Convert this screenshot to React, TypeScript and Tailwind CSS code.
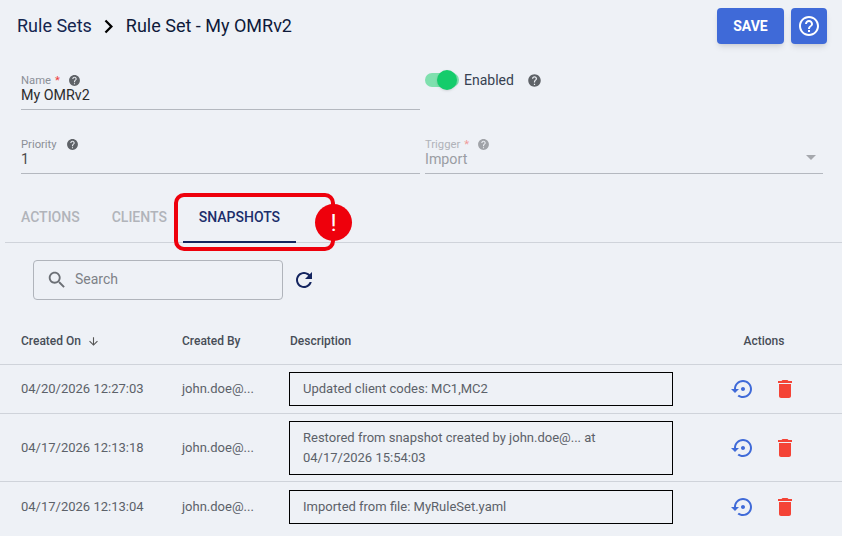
import React from "react";

const helpFilled =
  "M12 2C6.48 2 2 6.48 2 12s4.48 10 10 10 10-4.48 10-10S17.52 2 12 2zm1 17h-2v-2h2v2zm2.07-7.75l-.9.92C13.45 12.9 13 13.5 13 15h-2v-.5c0-1.1.45-2.1 1.17-2.83l1.24-1.26c.37-.36.59-.86.59-1.41 0-1.1-.9-2-2-2s-2 .9-2 2H8c0-2.21 1.79-4 4-4s4 1.79 4 4c0 .88-.36 1.68-.93 2.25z";

const Icon = ({ d, className }: { d: string; className: string }) => (
  <svg viewBox="0 0 24 24" fill="currentColor" className={className} aria-hidden="true">
    <path d={d} />
  </svg>
);

const Hint = ({ className }: { className: string }) => (
  <Icon d={helpFilled} className={`w-[13px] h-[13px] ${className}`} />
);

const rows = [
  {
    date: "04/20/2026 12:27:03",
    lines: ["Updated client codes: MC1,MC2"],
    height: "h-[49px] border-b",
  },
  {
    date: "04/17/2026 12:13:18",
    lines: ["Restored from snapshot created by john.doe@... at", "04/17/2026 15:54:03"],
    height: "h-[68px] border-b",
  },
  {
    date: "04/17/2026 12:13:04",
    lines: ["Imported from file: MyRuleSet.yaml"],
    height: "h-[49px]",
  },
];

const App = () => {
  return (
    <div className="relative w-[842px] h-[536px] overflow-hidden bg-[#eef1f6] font-['Roboto',sans-serif] text-[#1f2937]">
      {/* header */}
      <div className="flex items-center justify-between h-[36px] mt-2 pl-[17px] pr-[15px]">
        <div className="flex items-center text-[18px] leading-[34px] -mt-[1px] text-[#0e1a3a]">
          <span className="text-[#14254f]">Rule Sets</span>
          <Icon
            d="M10 6L8.59 7.41 13.17 12l-4.58 4.59L10 18l6-6z"
            className="w-[27px] h-[27px] ml-[3px] mr-[1px] mt-[1px] text-black"
          />
          <span className="ml-[3px]">Rule Set - My OMRv2</span>
        </div>
        <div className="flex gap-[7px]">
          <button
            type="button"
            className="w-[67px] h-[36px] rounded bg-[#3f6ad8] text-white text-[14px] font-bold shadow-md"
          >
            SAVE
          </button>
          <button
            type="button"
            className="flex items-center justify-center w-[36px] h-[36px] rounded bg-[#3f6ad8] text-white shadow-md"
          >
            <Icon
              d="M11 18h2v-2h-2v2zm1-16C6.48 2 2 6.48 2 12s4.48 10 10 10 10-4.48 10-10S17.52 2 12 2zm0 18c-4.41 0-8-3.59-8-8s3.59-8 8-8 8 3.59 8 8-3.59 8-8 8zm0-14c-2.21 0-4 1.79-4 4h2c0-1.1.9-2 2-2s2 .9 2 2c0 2-3 1.75-3 5h2c0-2.25 3-2.5 3-5 0-2.21-1.79-4-4-4z"
              className="w-[24px] h-[24px]"
            />
          </button>
        </div>
      </div>

      {/* form */}
      <div className="grid grid-cols-[399px_398px] gap-x-[5px] gap-y-[27px] ml-[21px] mt-[29px]">
        <div className="h-[37px] border-b border-[#b4b8bf]">
          <div className="flex items-center h-[15px] text-[11.25px] text-[#8b8f96] leading-[15px]">
            Name <span className="ml-[4px] text-[#ee3b3b]">*</span>
            <Hint className="ml-[8px] text-[#5f6368]" />
          </div>
          <div className="text-[14.25px] leading-[15px] text-[#2c2c2c]">My OMRv2</div>
        </div>
        <div className="flex items-center h-[24px] -mt-[5px] text-[14px] text-[#374151]">
          <span className="relative w-[34px] h-[14px] rounded-full bg-[#7fe0ae]">
            <span className="absolute -top-[3px] left-[12px] w-[20px] h-[20px] rounded-full bg-[#14cc6b] shadow" />
          </span>
          <span className="ml-[5px]">Enabled</span>
          <Hint className="ml-[13px] w-[15px] h-[15px] text-[#5f6368]" />
        </div>
        <div className="h-[37px] border-b border-[#b4b8bf]">
          <div className="flex items-center h-[15px] text-[11.25px] text-[#8b8f96] leading-[15px]">
            Priority
            <Hint className="ml-[9px] text-[#5f6368]" />
          </div>
          <div className="text-[14.25px] leading-[15px] text-[#4b4b4b]">1</div>
        </div>
        <div className="relative h-[37px] border-b border-[#b4b8bf]">
          <div className="flex items-center h-[15px] text-[11.25px] text-[#b0b3b9] leading-[15px]">
            Trigger <span className="ml-[4px] text-[#f09a9a]">*</span>
            <Hint className="ml-[8px] text-[#a0a3a8]" />
          </div>
          <div className="text-[14.25px] leading-[15px] text-[#9a9da3]">Import</div>
          <Icon d="M7 10l5 5 5-5z" className="absolute right-[0px] top-[8px] w-[24px] h-[24px] text-[#a5a8ad]" />
        </div>
      </div>

      {/* tabs */}
      <div className="flex items-center h-[51px] ml-[5px] mt-[18px] border-b border-[#cfd3da] text-[14px] font-medium">
        <span className="ml-[16px] text-[#b1b4ba]">ACTIONS</span>
        <span className="ml-[32px] text-[#b1b4ba]">CLIENTS</span>
        <span className="relative flex items-center justify-center ml-[16px] w-[113px] h-full text-[#1c2e6b]">
          SNAPSHOTS
          <span className="absolute left-0 right-0 bottom-[-1px] h-[2px] bg-[#14255f]" />
        </span>
      </div>

      {/* callout */}
      <div className="absolute left-[174px] top-[193px] w-[161px] h-[58px] rounded-[10px] border-[4px] border-[#ee000c]" />
      <div className="absolute left-[315px] top-[204px] flex items-center justify-center w-[37px] h-[37px] rounded-full bg-[#ee000c] text-white text-[24px] leading-none">
        !
      </div>

      {/* search */}
      <div className="flex items-center mt-[17px] ml-[33px]">
        <div className="flex items-center w-[250px] h-[40px] pl-[12px] pb-[1px] rounded border border-[#b0b4bb] text-[14px] text-[#7d8187]">
          <Icon
            d="M15.5 14h-.79l-.28-.27C15.41 12.59 16 11.11 16 9.5 16 5.91 13.09 3 9.5 3S3 5.91 3 9.5 5.91 16 9.5 16c1.61 0 3.09-.59 4.23-1.57l.27.28v.79l5 4.99L20.49 19l-4.99-5zm-6 0C7.01 14 5 11.99 5 9.5S7.01 5 9.5 5 14 7.01 14 9.5 11.99 14 9.5 14z"
            className="w-[22px] h-[22px] mr-[7px] text-[#6b6f75]"
          />
          Search
        </div>
        <Icon
          d="M17.65 6.35C16.2 4.9 14.21 4 12 4c-4.42 0-7.99 3.58-7.99 8s3.57 8 7.99 8c3.73 0 6.84-2.55 7.73-6h-2.08c-.82 2.33-3.04 4-5.65 4-3.31 0-6-2.69-6-6s2.69-6 6-6c1.66 0 3.14.69 4.22 1.78L13 11h7V4l-2.35 2.35z"
          className="w-[24px] h-[24px] ml-[9px] text-[#14255f]"
        />
      </div>

      {/* table */}
      <div className="mt-[18px] text-[12px] text-[#474d57]">
        <div className="grid grid-cols-[182px_108px_410px_1fr] items-center h-[47px] border-b border-[#cfd3da] font-medium">
          <span className="flex items-center pl-[21px]">
            Created On
            <Icon d="M20 12l-1.41-1.41L13 16.17V4h-2v12.17l-5.58-5.59L4 12l8 8 8-8z" className="w-[13px] h-[13px] ml-[6px] text-[#555]" />
          </span>
          <span>Created By</span>
          <span>Description</span>
          <span className="pr-[14px] text-center">Actions</span>
        </div>
        {rows.map((row) => (
          <div
            key={row.date}
            className={`grid grid-cols-[182px_107px_410px_1fr] items-center border-[#cfd3da] text-[#5c6169] ${row.height}`}
          >
            <span className="pl-[21px] text-[13px]">{row.date}</span>
            <span className="text-[13px]">john.doe@...</span>
            <div className="w-[384px] px-[13px] py-[6px] border border-black text-[13px] leading-[20px]">
              {row.lines.map((line) => (
                <div key={line}>{line}</div>
              ))}
            </div>
            <div className="flex items-center gap-[18px] pl-[32px]">
              <Icon
                d="M14 12c0-1.1-.9-2-2-2s-2 .9-2 2 .9 2 2 2 2-.9 2-2zm-2-9c-4.97 0-9 4.03-9 9H0l4 4 4-4H5c0-3.87 3.13-7 7-7s7 3.13 7 7-3.13 7-7 7c-1.51 0-2.91-.49-4.06-1.3l-1.42 1.44C8.04 20.3 9.94 21 12 21c4.97 0 9-4.03 9-9s-4.03-9-9-9z"
                className="w-[24px] h-[24px] text-[#3f6ad8]"
              />
              <Icon
                d="M6 19c0 1.1.9 2 2 2h8c1.1 0 2-.9 2-2V7H6v12zM19 4h-3.5l-1-1h-5l-1 1H5v2h14V4z"
                className="w-[24px] h-[24px] text-[#f44336]"
              />
            </div>
          </div>
        ))}
      </div>
    </div>
  );
};

export default App;
